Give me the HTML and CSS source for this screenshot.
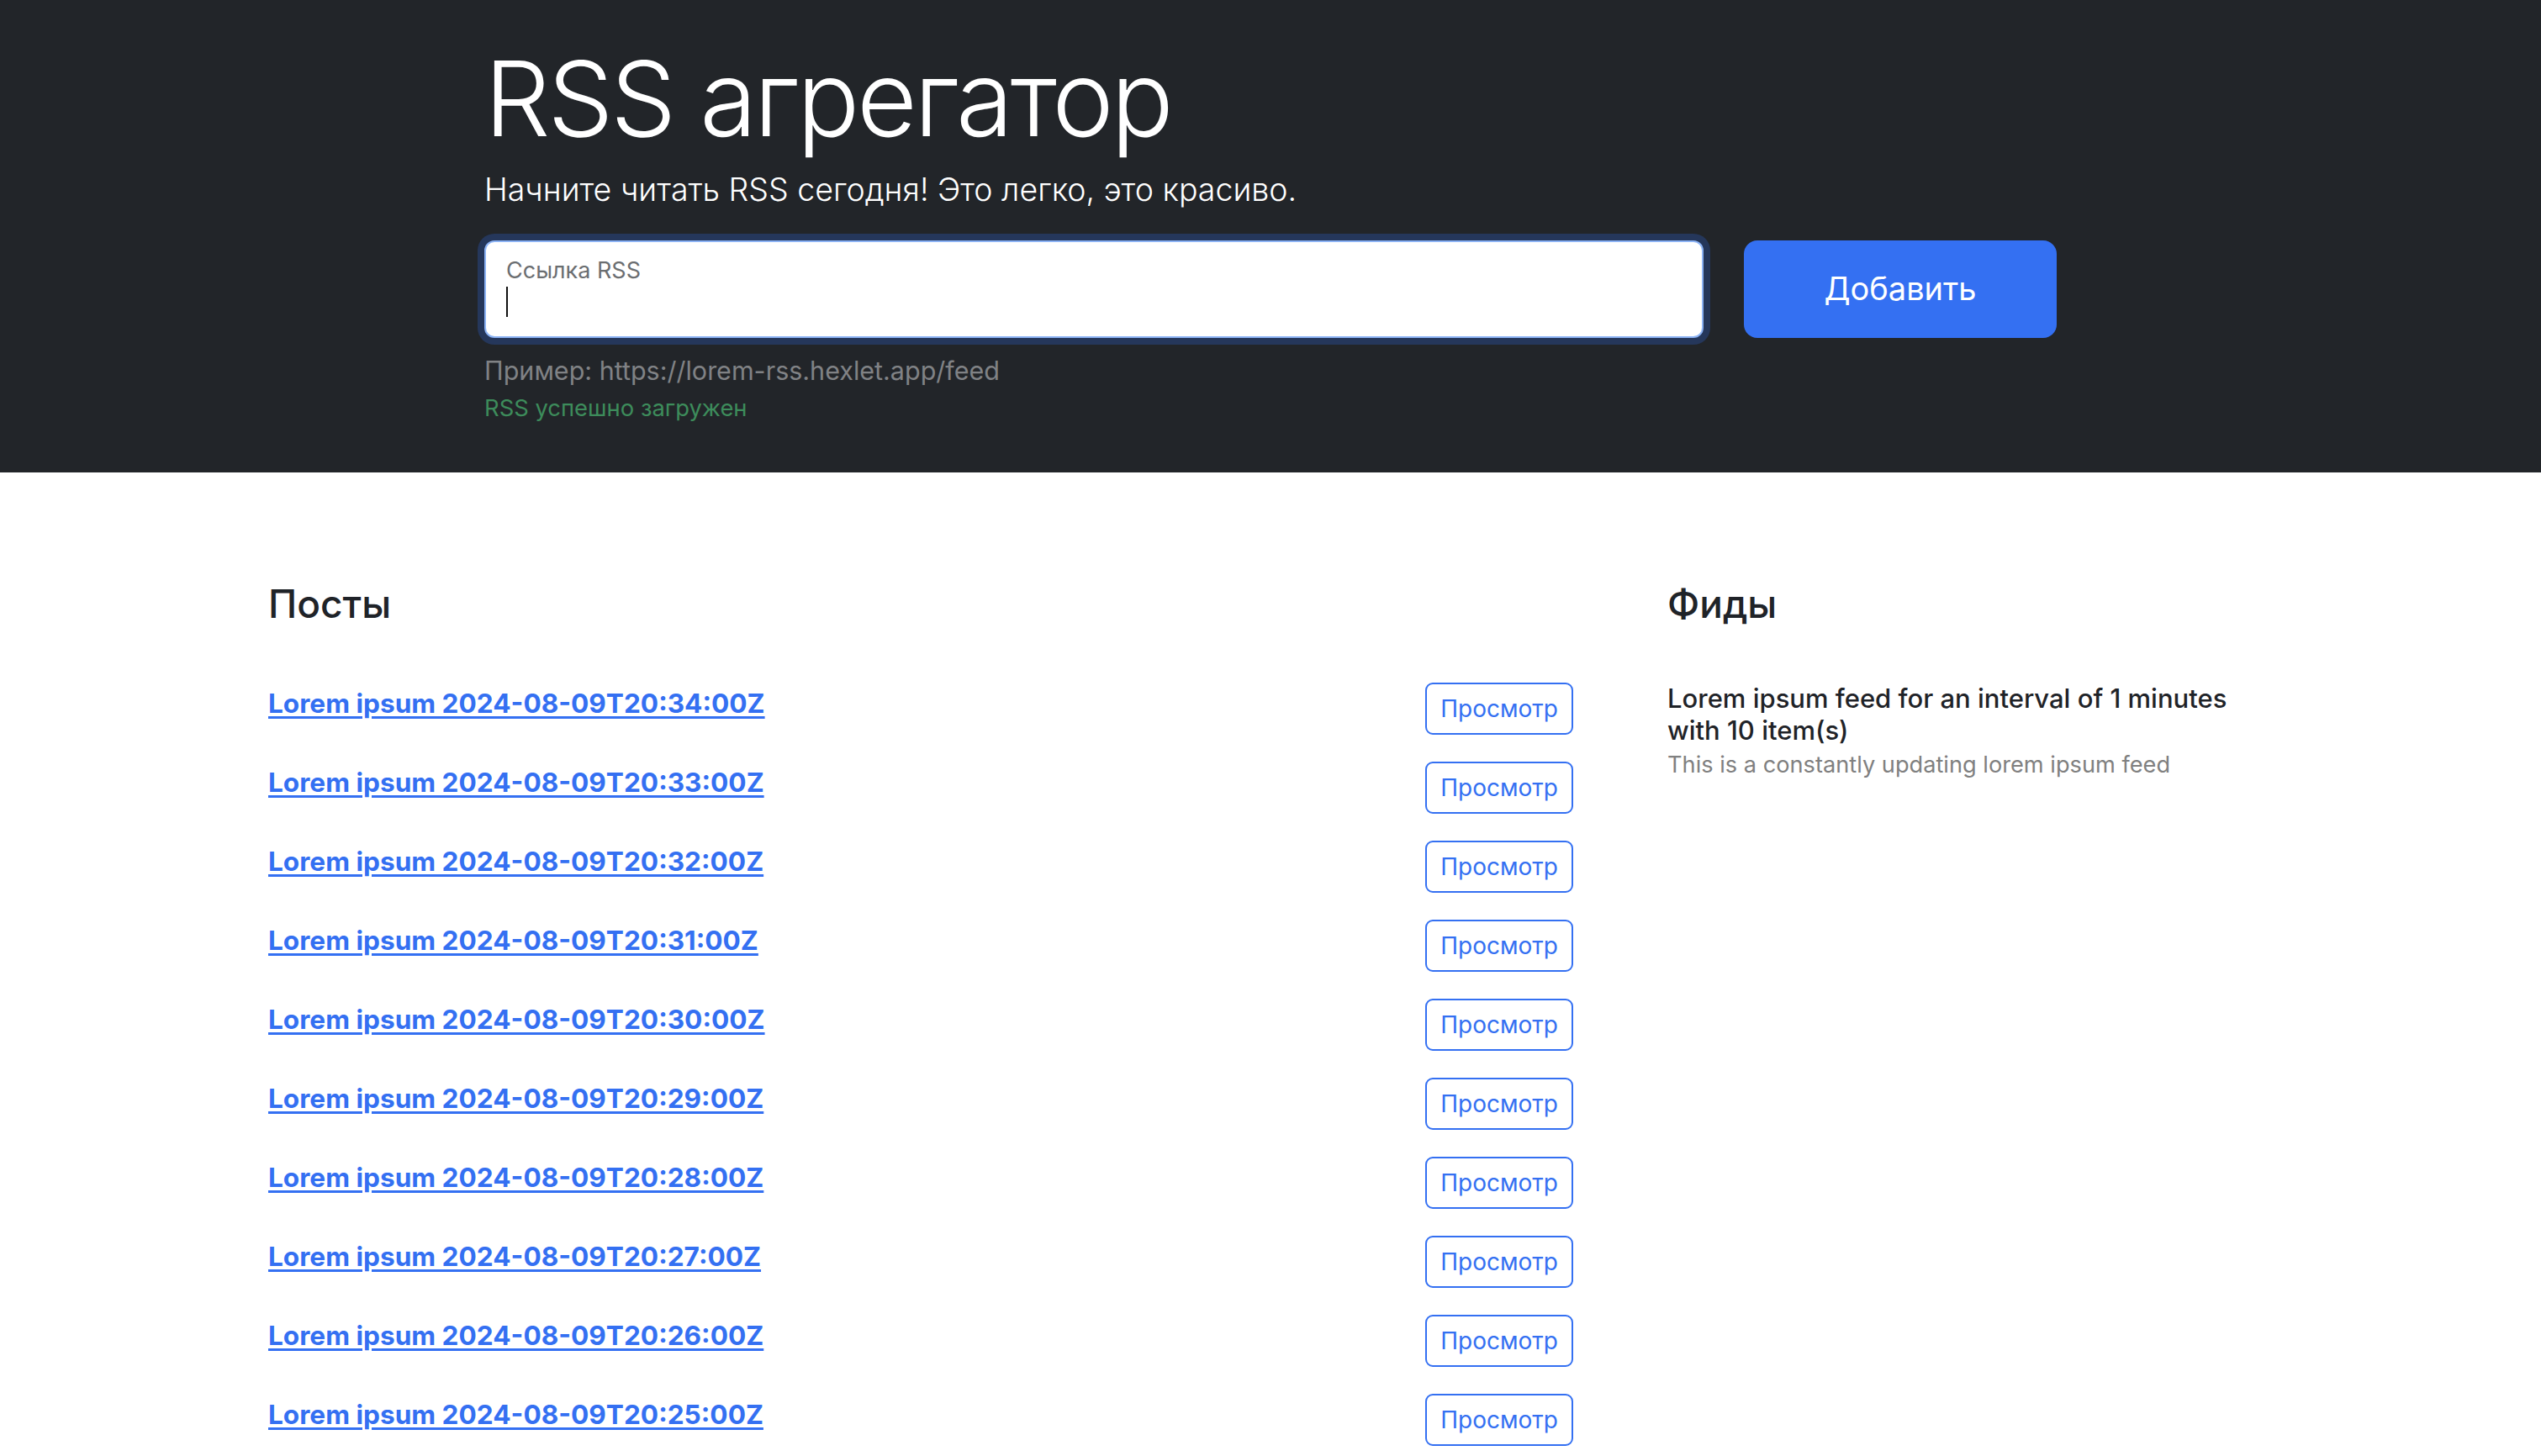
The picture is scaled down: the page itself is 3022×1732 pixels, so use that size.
FILE: index.html
```html
<!DOCTYPE html>
<html lang="ru">
<head>
<meta charset="utf-8">
<title>RSS агрегатор</title>
<link rel="stylesheet" href="styles.css">
</head>
<body>
<section class="hero">
  <div class="hero-col">
    <h1 class="title">RSS агрегатор</h1>
    <p class="lead">Начните читать RSS сегодня! Это легко, это красиво.</p>
    <form class="rss-form">
      <div class="field">
        <input class="field-input" id="url-input" type="text" aria-label="url" autocomplete="off">
        <label class="field-label" for="url-input">Ссылка RSS</label>
        <span class="caret"></span>
      </div>
      <button type="button" class="btn-add">Добавить</button>
    </form>
    <p class="example">Пример: https://lorem-rss.hexlet.app/feed</p>
    <p class="feedback">RSS успешно загружен</p>
  </div>
</section>
<section class="main">
  <div class="row">
    <div class="col-posts">
      <div class="card-head"><h2 class="card-title">Посты</h2></div>
      <ul class="list">
        <li class="item"><a href="#" class="post-link">Lorem ipsum 2024-08-09T20:34:00Z</a><button type="button" class="btn-view">Просмотр</button></li>
        <li class="item"><a href="#" class="post-link">Lorem ipsum 2024-08-09T20:33:00Z</a><button type="button" class="btn-view">Просмотр</button></li>
        <li class="item"><a href="#" class="post-link">Lorem ipsum 2024-08-09T20:32:00Z</a><button type="button" class="btn-view">Просмотр</button></li>
        <li class="item"><a href="#" class="post-link">Lorem ipsum 2024-08-09T20:31:00Z</a><button type="button" class="btn-view">Просмотр</button></li>
        <li class="item"><a href="#" class="post-link">Lorem ipsum 2024-08-09T20:30:00Z</a><button type="button" class="btn-view">Просмотр</button></li>
        <li class="item"><a href="#" class="post-link">Lorem ipsum 2024-08-09T20:29:00Z</a><button type="button" class="btn-view">Просмотр</button></li>
        <li class="item"><a href="#" class="post-link">Lorem ipsum 2024-08-09T20:28:00Z</a><button type="button" class="btn-view">Просмотр</button></li>
        <li class="item"><a href="#" class="post-link">Lorem ipsum 2024-08-09T20:27:00Z</a><button type="button" class="btn-view">Просмотр</button></li>
        <li class="item"><a href="#" class="post-link">Lorem ipsum 2024-08-09T20:26:00Z</a><button type="button" class="btn-view">Просмотр</button></li>
        <li class="item"><a href="#" class="post-link">Lorem ipsum 2024-08-09T20:25:00Z</a><button type="button" class="btn-view">Просмотр</button></li>
      </ul>
    </div>
    <div class="col-feeds">
      <div class="card-head"><h2 class="card-title">Фиды</h2></div>
      <ul class="list">
        <li class="feed-item">
          <h3 class="feed-title">Lorem ipsum feed for an interval of 1 minutes with 10 item(s)</h3>
          <p class="feed-desc">This is a constantly updating lorem ipsum feed</p>
        </li>
      </ul>
    </div>
  </div>
</section>
</body>
</html>
```

FILE: styles.css
```css
* { box-sizing: border-box; }

html, body {
  margin: 0;
  padding: 0;
  background: #ffffff;
}

body {
  font-family: "Inter", "Noto Sans", sans-serif;
  font-size: 32px;
  line-height: 1.5;
  color: #212529;
}

/* ---------- hero ---------- */
.hero {
  background: #222529;
  padding: 41px 96px 57.5px;
}

.hero-col {
  width: 1870px;
  margin: 0 auto;
  color: #ffffff;
}

.title {
  margin: 0;
  font-size: 124px;
  font-weight: 300;
  line-height: 153.6px;
  letter-spacing: -3.5px;
}

.lead {
  margin: 2px 0 32px;
  font-size: 37.5px;
  font-weight: 300;
  line-height: 57px;
}

.rss-form {
  display: flex;
  gap: 48px;
  align-items: stretch;
}

.field {
  position: relative;
  flex: 1 1 auto;
}

.field-input {
  display: block;
  width: 100%;
  height: 116px;
  border: 2px solid #8cb3f5;
  border-radius: 12px;
  background: #ffffff;
  box-shadow: 0 0 0 8px #25375b;
  outline: none;
  padding: 52px 24px 20px;
  font-family: inherit;
  font-size: 32px;
  color: #212529;
}

.field-label {
  position: absolute;
  left: 26px;
  top: 15px;
  font-size: 27px;
  line-height: 41px;
  color: #6b6e71;
  pointer-events: none;
}

.caret {
  position: absolute;
  left: 26px;
  top: 55px;
  width: 2px;
  height: 36px;
  background: #111111;
}

.btn-add {
  flex: 0 0 auto;
  width: 372px;
  border: 0;
  border-radius: 16px;
  background: #3470f2;
  color: #ffffff;
  font-family: inherit;
  font-size: 38px;
  line-height: 1.5;
  padding: 0 20px;
}

.example {
  margin: 17px 0 0;
  font-size: 30.5px;
  line-height: 44px;
  color: #808285;
}

.feedback {
  margin: 3px 0 0;
  font-size: 27.4px;
  line-height: 39px;
  color: #3d8c5b;
}

/* ---------- main ---------- */
.main {
  max-width: 2640px;
  margin: 0 auto;
  padding: 96px;
}

.row {
  display: flex;
  margin: 0 -24px;
}

.col-posts {
  flex: 0 0 66.6667%;
  padding: 0 24px;
}

.col-feeds {
  flex: 0 0 33.3333%;
  padding: 0 24px;
}

.card-head {
  padding: 32px;
}

.card-title {
  margin: 0 0 16px;
  font-size: 46px;
  font-weight: 500;
  line-height: 57.6px;
  color: #1f2328;
}

.list {
  list-style: none;
  margin: 0;
  padding: 0;
}

.item {
  display: flex;
  justify-content: space-between;
  align-items: flex-start;
  padding: 16px 32px;
}

.post-link {
  font-weight: 700;
  font-size: 31.6px;
  line-height: 48px;
  margin-top: 1px;
  color: #3470f2;
  text-decoration: underline;
  text-decoration-thickness: 3px;
  text-underline-offset: 4px;
}

.btn-view {
  border: 2px solid #3470f2;
  border-radius: 9px;
  background: #ffffff;
  color: #3470f2;
  font-family: inherit;
  font-size: 28px;
  line-height: 42px;
  padding: 8px 16px;
}

.feed-item {
  padding: 16px 32px;
}

.feed-title {
  margin: 0;
  font-size: 31px;
  font-weight: 500;
  line-height: 38.4px;
  color: #1f2328;
}

.feed-desc {
  margin: 0;
  font-size: 27.2px;
  line-height: 42px;
  color: #808080;
}
```
